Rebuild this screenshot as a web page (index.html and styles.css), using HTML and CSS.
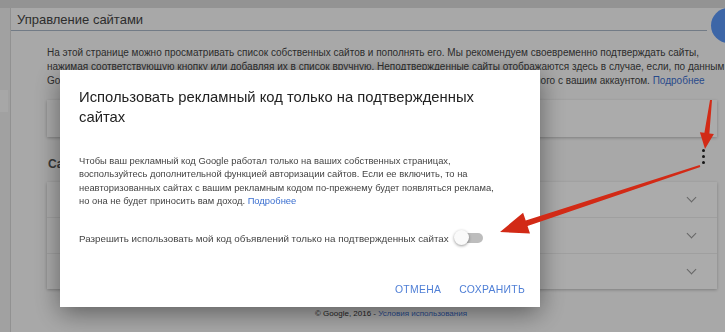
FILE: index.html
```html
<!DOCTYPE html>
<html lang="ru">
<head>
  <meta charset="UTF-8" />
  <meta name="viewport" content="width=device-width, initial-scale=1" />
  <title>Управление сайтами</title>
  <link rel="stylesheet" href="styles.css">
</head>
<body>
  <div class="topbar"></div>

  <div class="main">
    <div class="sidebar">
      <div class="side-item"></div>
    </div>

    <div class="card">
      <div class="card-head">
        <h2>Управление сайтами</h2>
        <div class="fab"></div>
      </div>

      <div class="card-body">
        <p class="intro">На этой странице можно просматривать список собственных сайтов и пополнять его. Мы рекомендуем своевременно подтверждать сайты,<br>нажимая соответствующую кнопку или добавляя их в список вручную. Неподтвержденные сайты отображаются здесь в случае, если, по данным<br>Google, на них за последнее время уже показывались объявления при помощи рекламного кода, связанного с вашим аккаунтом. <a href="#">Подробнее</a></p>

        <div class="box box-single"></div>

        <div class="section-head">
          <h3>Сайты</h3>
          <span class="dots"><i></i><i></i><i></i></span>
        </div>

        <div class="box">
          <div class="row"><span class="chev"></span></div>
          <div class="row"><span class="chev"></span></div>
          <div class="row"><span class="chev"></span></div>
        </div>

        <div class="footer">© Google, 2016 - <a href="#">Условия использования</a></div>
      </div>
    </div>
  </div>

  <div class="overlay"></div>

  <div class="dialog">
    <h1>Использовать рекламный код только на подтвержденных сайтах</h1>
    <p class="dlg-text">Чтобы ваш рекламный код Google работал только на ваших собственных страницах,<br>воспользуйтесь дополнительной функцией авторизации сайтов. Если ее включить, то на<br>неавторизованных сайтах с вашим рекламным кодом по-прежнему будет появляться реклама,<br>но она не будет приносить вам доход. <a href="#">Подробнее</a></p>
    <label class="toggle-row">
      Разрешить использовать мой код объявлений только на подтвержденных сайтах
      <span class="toggle"><span class="knob"></span></span>
    </label>
    <div class="actions">
      <button>Отмена</button>
      <button>Сохранить</button>
    </div>
  </div>

  <svg class="arrows" width="725" height="332" viewBox="0 0 725 332">
    <polygon points="712,100 710,100 704.4,132.8 699.9,132.3 705,149 713.9,133.9 709.4,133.4" />
    <polygon points="700.3,167 699.7,165 525.7,220.4 523.1,212.7 500,232 530,233.6 527.5,226" />
  </svg>
</body>
</html>
```

FILE: styles.css
```css
html, body {
  margin: 0;
  height: 100%;
  overflow: hidden;
}
body {
  font-family: "Liberation Sans", Arial, sans-serif;
  background: #f4f4f4;
  color: #333;
}
a {
  color: #3b6fd0;
  text-decoration: none;
}

.topbar {
  height: 8px;
  background: #dcdcdc;
}
.main {
  display: flex;
  height: 324px;
}
.sidebar {
  width: 10px;
  border-right: 1px solid #d8d8d8;
  background: #f0f0f0;
  flex-shrink: 0;
}
.side-item {
  margin-top: 82px;
  height: 22px;
  width: 8px;
  background: #fafafa;
}

.card {
  flex: 1;
  background: #fbfbfb;
  overflow: hidden;
  position: relative;
}
.card-head {
  height: 22px;
  margin-right: 18px;
  border-bottom: 1px solid #aab8c8;
  display: flex;
  align-items: center;
}
.card-head h2 {
  margin: 0 0 0 6px;
  font-size: 13px;
  font-weight: normal;
  color: #444;
}
.fab {
  position: absolute;
  left: 700px;
  top: 0;
  width: 35px;
  height: 35px;
  border-radius: 50%;
  background: #5c98fa;
}

.card-body {
  padding: 0 8px 0 36px;
}
.intro {
  margin: 15px 0 0;
  font-size: 10px;
  line-height: 14px;
  white-space: nowrap;
  color: #444;
}

.box {
  background: #fff;
  box-shadow: 0 1px 3px rgba(0, 0, 0, 0.25);
}
.box-single {
  margin-top: 12px;
  height: 37px;
}

.section-head {
  height: 45px;
  display: flex;
  align-items: center;
  justify-content: space-between;
}
.section-head h3 {
  margin: 8px 0 0 1px;
  font-size: 12px;
  color: #555;
}
.dots {
  display: flex;
  flex-direction: column;
  gap: 3px;
  margin: 0 12px 6px 0;
}
.dots i {
  width: 3px;
  height: 3px;
  border-radius: 50%;
  background: #222;
}

.row {
  height: 35px;
  border-bottom: 1px solid #eee;
  display: flex;
  align-items: center;
  justify-content: flex-end;
  padding-right: 22px;
}
.row:last-child {
  border-bottom: none;
}
.chev {
  width: 6px;
  height: 6px;
  border-right: 1.3px solid #999;
  border-bottom: 1.3px solid #999;
  transform: rotate(45deg);
  margin-top: -4px;
}

.footer {
  margin-top: 20px;
  text-align: center;
  font-size: 8px;
  color: #333;
  padding-left: 18px;
}

.overlay {
  position: fixed;
  inset: 0;
  background: rgba(0, 0, 0, 0.33);
}

.dialog {
  position: fixed;
  left: 60px;
  top: 70px;
  width: 480px;
  height: 237px;
  box-sizing: border-box;
  padding: 17px 15px 12px 19px;
  background: #fff;
  box-shadow: 0 6px 24px rgba(0, 0, 0, 0.45);
  display: flex;
  flex-direction: column;
}
.dialog h1 {
  margin: 0;
  font-size: 14.8px;
  line-height: 20px;
  font-weight: normal;
  color: #222;
  padding-right: 20px;
}
.dlg-text {
  margin: 27px 0 0;
  font-size: 9.4px;
  line-height: 13.4px;
  white-space: nowrap;
  color: #444;
}
.toggle-row {
  margin-top: 25px;
  display: flex;
  align-items: center;
  gap: 6px;
  font-size: 9.8px;
  color: #444;
}
.toggle {
  position: relative;
  width: 28px;
  height: 10px;
  border-radius: 5px;
  background: #bdbdbd;
}
.knob {
  position: absolute;
  left: -1px;
  top: -3px;
  width: 15px;
  height: 15px;
  border-radius: 50%;
  background: #fafafa;
  box-shadow: 0 1px 3px rgba(0, 0, 0, 0.4);
}
.actions {
  margin-top: auto;
  display: flex;
  justify-content: flex-end;
  align-items: flex-end;
  gap: 18px;
}
.actions button {
  border: none;
  background: none;
  padding: 0;
  font-family: inherit;
  font-size: 10.4px;
  letter-spacing: 0.3px;
  text-transform: uppercase;
  color: #4f7fd6;
  cursor: pointer;
}

.arrows {
  position: fixed;
  left: 0;
  top: 0;
  pointer-events: none;
}
.arrows polygon {
  fill: #d22a16;
}
```
